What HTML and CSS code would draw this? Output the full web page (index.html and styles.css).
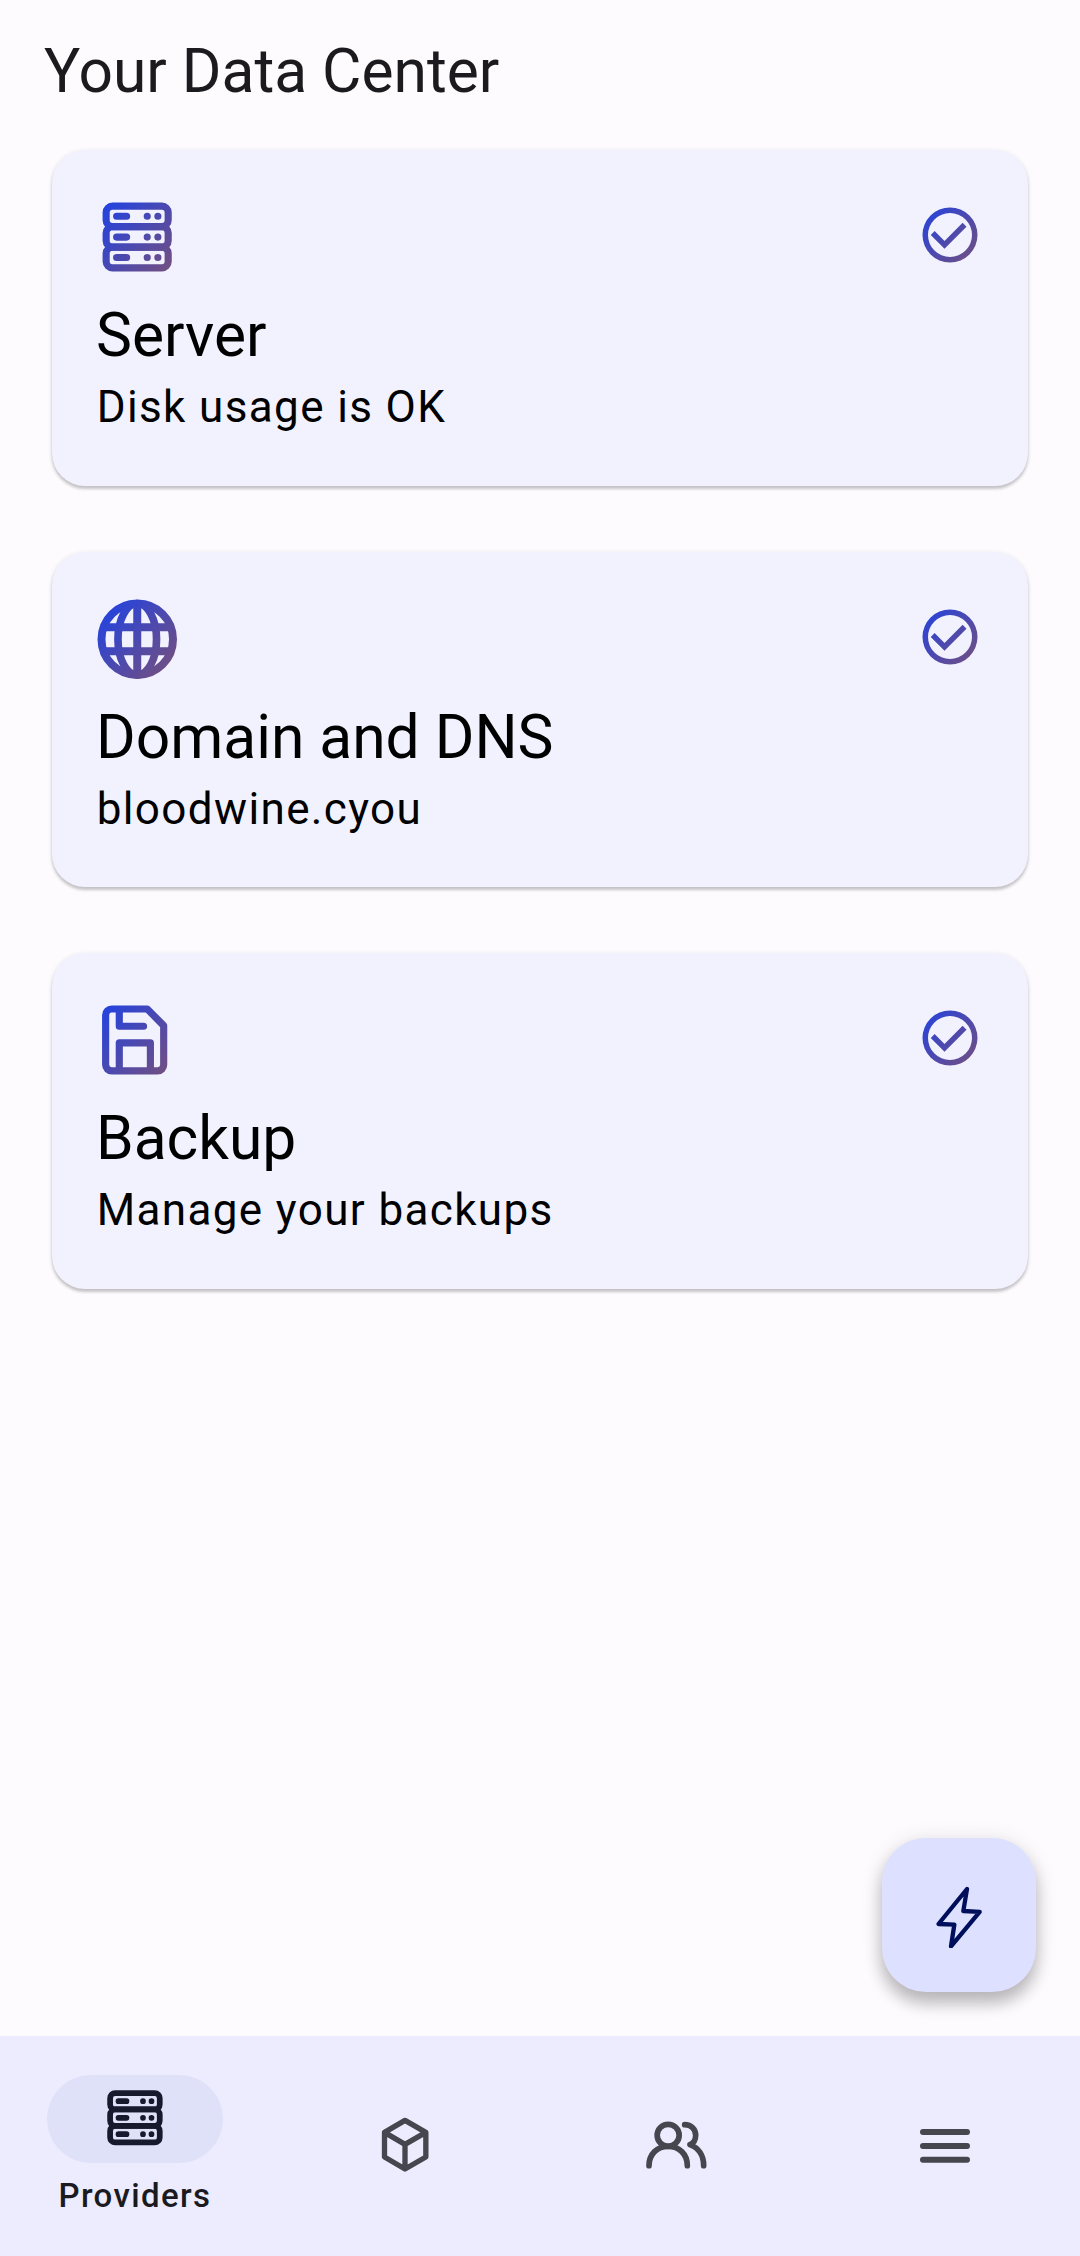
FILE: index.html
```html
<!DOCTYPE html>
<html lang="en">
<head>
<meta charset="utf-8">
<title>Your Data Center</title>
<link rel="stylesheet" href="styles.css">
</head>
<body>
<svg class="defs" aria-hidden="true">
  <defs>
    <linearGradient id="brand" gradientUnits="userSpaceOnUse" x1="52" y1="82" x2="284" y2="288">
      <stop offset="0" stop-color="#1f42e4"/><stop offset="1" stop-color="#78507a"/>
    </linearGradient>
    <linearGradient id="brand-small" gradientUnits="userSpaceOnUse" x1="0" y1="2.4" x2="22.8" y2="22.8">
      <stop offset="0" stop-color="#1f42e4"/><stop offset="1" stop-color="#78507a"/>
    </linearGradient>
    <symbol id="server" viewBox="48 48 248 248">
      <g fill="none" stroke-width="21.5" stroke-linecap="round">
        <rect x="78.5" y="78.5" width="186.5" height="61.5" rx="19"/>
        <rect x="78.5" y="140" width="186.5" height="61.5" rx="19"/>
        <rect x="78.5" y="201.5" width="186.5" height="62.5" rx="19"/>
        <path d="M110 109H140M202 109h.01M234 109h.01M110 171.500H140M202 171.500h.01M234 171.500h.01M110 233H140M202 233h.01M234 233h.01"/>
      </g>
    </symbol>
    <symbol id="done" viewBox="0 0 24 24">
      <path d="M16.590 7.580 10 14.170l-3.590-3.580L5 12l5 5 8-8zM12 2a10 10 0 1 0 0 20 10 10 0 0 0 0-20zm0 18a8 8 0 1 1 0-16 8 8 0 0 1 0 16z"/>
    </symbol>
  </defs>
</svg>
<div class="screen">
  <header class="title">Your Data Center</header>
  <main class="cards">
    <section class="card">
      <div class="card-head">
        <svg class="card-icon" stroke="url(#brand)"><use href="#server"/></svg>
        <svg class="state" fill="url(#brand-small)"><use href="#done"/></svg>
      </div>
      <h2>Server</h2>
      <p>Disk usage is OK</p>
    </section>
    <section class="card">
      <div class="card-head">
        <svg class="card-icon" viewBox="48 53 248 248" fill="none" stroke="url(#brand)" stroke-width="24">
          <circle cx="172" cy="177" r="107.500"/>
          <ellipse cx="172" cy="177" rx="58" ry="107.500" stroke-width="23"/>
          <path d="M172 70V284M70 141H274M70 213H274"/>
        </svg>
        <svg class="state" fill="url(#brand-small)"><use href="#done"/></svg>
      </div>
      <h2>Domain and DNS</h2>
      <p>bloodwine.cyou</p>
    </section>
    <section class="card">
      <div class="card-head">
        <svg class="card-icon" viewBox="48 58 248 248" fill="none" stroke="url(#brand)" stroke-width="21.500" stroke-linecap="round" stroke-linejoin="round">
          <path d="M95 88H202L251.500 138V256a18 18 0 0 1-18 18H95a18 18 0 0 1-18-18V106a18 18 0 0 1 18-18zM118 88V140H191M118 274V190H211.500V274"/>
        </svg>
        <svg class="state" fill="url(#brand-small)"><use href="#done"/></svg>
      </div>
      <h2>Backup</h2>
      <p>Manage your backups</p>
    </section>
  </main>
  <button class="fab" aria-label="Jobs">
    <svg viewBox="198 216 198 198" fill="none" stroke="#000f5c" stroke-width="13" stroke-linejoin="round">
      <path d="M321 237 310 303 359 305.500 273 409 283 344 235.500 342z"/>
    </svg>
  </button>
  <nav class="nav">
    <a class="tab active">
      <span class="pill"><svg stroke="currentColor"><use href="#server"/></svg></span>
      <span class="label">Providers</span>
    </a>
    <a class="tab">
      <svg viewBox="66 69 198 198" fill="none" stroke="currentColor" stroke-width="16" stroke-linejoin="round">
        <path d="M165 91 227.500 127V201L165 237 103.500 201V127zM103.500 127 165 163 227.500 127M165 163V237"/>
      </svg>
    </a>
    <a class="tab">
      <svg viewBox="66 69 198 198" fill="none" stroke="currentColor" stroke-width="17" stroke-linecap="round" stroke-linejoin="round">
        <circle cx="144.500" cy="136" r="33"/>
        <path d="M87 227C87 192 112 169 144.500 169S202 192 202 227M194 104C214 104 227 118 227 136 227 149 220 160 210 164 236 174 251 197 251 227"/>
      </svg>
    </a>
    <a class="tab">
      <svg viewBox="66 69 198 198" fill="none" stroke="currentColor" stroke-width="18" stroke-linecap="round">
        <path d="M99 126H231M99 168H231M99 209H231"/>
      </svg>
    </a>
  </nav>
</div>
</body>
</html>
```
FILE: styles.css
```css
* { box-sizing: border-box; }
body { margin: 0; background: #fefbff; font-family: Roboto, sans-serif; }
svg { display: block; width: 66px; height: 66px; }
.defs { position: absolute; width: 0; height: 0; }
.screen { position: relative; display: flex; flex-direction: column; height: 2256px; }
.title {
  padding: 33px 44px 0;
  height: 150px;
  font-size: 60.5px;
  line-height: 77px;
  color: #1b1b1f;
}
.cards { flex: 1; display: flex; flex-direction: column; gap: 66px; padding: 0 52px; }
.card {
  height: 335.500px;
  padding: 46.300px 44px 44px;
  border-radius: 33px;
  background: #f1f2fe;
  box-shadow: 0 3px 3px rgba(0, 0, 0, .18), 0 1px 5px rgba(0, 0, 0, .1);
  color: #000;
}
.card-head { display: flex; justify-content: space-between; height: 101px; }
.card-icon { width: 82.500px; height: 82.500px; }
.state { margin: 6px .700px 0 0; }
.card h2 { margin: 0; font-size: 60.500px; font-weight: 400; line-height: 77px; }
.card p { margin: 0; padding-left: .7px; font-size: 44px; line-height: 66px; letter-spacing: 1.375px; }
.fab {
  position: absolute;
  right: 44px;
  bottom: 264px;
  display: grid;
  place-items: center;
  width: 154px;
  height: 154px;
  padding: 0;
  border: 0;
  border-radius: 44px;
  background: #dde1ff;
  box-shadow: 0 12px 16px rgba(0, 0, 0, .22), 0 3px 22px rgba(0, 0, 0, .12);
}
.nav { display: grid; grid-template-columns: repeat(4, 1fr); height: 220px; background: #ececfe; color: #46464f; }
.tab { display: flex; flex-direction: column; align-items: center; justify-content: center; }
.active { color: #161a2c; }
.pill { display: grid; place-items: center; width: 176px; height: 88px; border-radius: 44px; background: #dfe1f9; }
.pill svg { margin-bottom: 1px; }
.label { margin-top: 11px; font-size: 33px; font-weight: 500; line-height: 44px; letter-spacing: 1.375px; color: #1b1b1f; }
```
